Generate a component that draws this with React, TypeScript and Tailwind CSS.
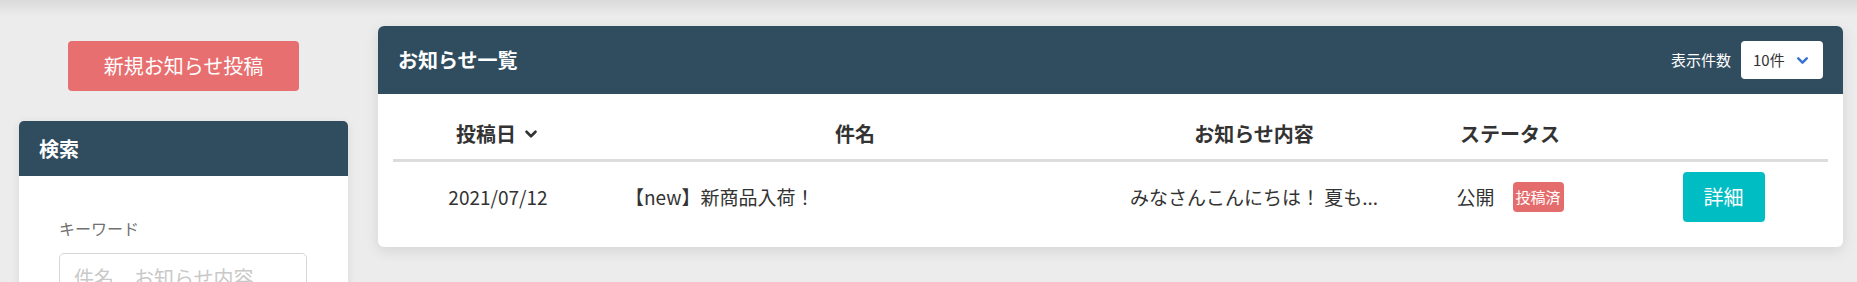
import { ChevronDown } from "lucide-react";

const columns = [
  { key: "date", label: "投稿日", sortable: true },
  { key: "title", label: "件名" },
  { key: "body", label: "お知らせ内容" },
  { key: "status", label: "ステータス" },
  { key: "action", label: "" },
];

const notices = [
  {
    id: 1,
    date: "2021/07/12",
    title: "【new】新商品入荷！",
    body: "みなさんこんにちは！ 夏も...",
    status: "公開",
    badge: "投稿済",
  },
];

const grid = "grid grid-cols-[210px_504px_294px_218px_209px]";

function SearchPanel() {
  return (
    <aside className="flex w-[329px] shrink-0 flex-col items-center">
      <button className="mt-[15px] h-[50px] w-[231px] rounded-[4px] bg-[#e86f6f] text-[20px] text-white">
        新規お知らせ投稿
      </button>
      <div className="mt-[30px] w-full overflow-hidden rounded-[5px] shadow-[0_2px_10px_rgba(0,0,0,0.08)]">
        <div className="flex h-[55px] items-center bg-[#304d5f] px-[20px] text-[20px] font-bold text-white">
          検索
        </div>
        <div className="bg-white px-[40px] pt-[40px] pb-[20px]">
          <label className="block text-[16px] leading-[24px] text-[#707070]">キーワード</label>
          <input
            className="mt-[13px] h-[48px] w-[248px] rounded-[5px] border border-[#d6d6d6] px-[14px] text-[20px] placeholder:text-[#c9c9c9]"
            placeholder="件名、お知らせ内容"
          />
        </div>
      </div>
    </aside>
  );
}

function NoticeList() {
  return (
    <section className="w-[1465px] shrink-0 self-start overflow-hidden rounded-[6px] bg-white shadow-[0_4px_14px_rgba(0,0,0,0.1)]">
      <div className="flex h-[68px] items-center justify-between bg-[#304d5f] px-[20px]">
        <h2 className="text-[20px] font-bold text-white">お知らせ一覧</h2>
        <div className="flex items-center gap-[10px]">
          <span className="text-[15px] text-white">表示件数</span>
          <div className="flex h-[38px] w-[82px] items-center justify-between rounded-[4px] bg-white pl-[12px] pr-[12px] text-[15px] text-[#333]">
            <span>10件</span>
            <ChevronDown className="h-[17px] w-[17px] text-[#3a72d0]" strokeWidth={3.5} />
          </div>
        </div>
      </div>

      <div className="px-[15px] pb-[15px]">
        <div className={`${grid} border-b-[3px] border-[#dcdcdc] pt-[26px] pb-[11px] text-[20px] leading-[28px] font-bold text-[#333]`}>
          {columns.map((c) => (
            <div key={c.key} className="flex items-center justify-center gap-[6px]">
              {c.label}
              {c.sortable && <ChevronDown className="h-[18px] w-[18px]" strokeWidth={3.5} />}
            </div>
          ))}
        </div>

        {notices.map((n) => (
          <div key={n.id} className={`${grid} items-center py-[10px] text-[19px] leading-[28px] text-[#333]`}>
            <div className="text-center">{n.date}</div>
            <div className="pl-[22px]">{n.title}</div>
            <div className="text-center">{n.body}</div>
            <div className="flex items-center justify-center gap-[18px]">
              <span>{n.status}</span>
              <span className="rounded-[4px] bg-[#e46c6c] px-[3px] text-[15px] leading-[30px] text-white">
                {n.badge}
              </span>
            </div>
            <div className="flex justify-center">
              <button className="h-[50px] w-[82px] rounded-[4px] bg-[#00bdc4] text-[20px] text-white">
                詳細
              </button>
            </div>
          </div>
        ))}
      </div>
    </section>
  );
}

export default function App() {
  return (
    <div
      className="relative h-[282px] w-[1857px] overflow-hidden bg-[#ececec]"
      style={{ fontFamily: '"Noto Sans CJK JP", "Noto Sans", sans-serif' }}
    >
      <div className="pointer-events-none absolute inset-x-0 top-0 h-[16px] bg-linear-to-b from-[#dadada] to-transparent" />
      <div className="flex gap-[30px] pt-[26px] pl-[19px]">
        <SearchPanel />
        <NoticeList />
      </div>
    </div>
  );
}
